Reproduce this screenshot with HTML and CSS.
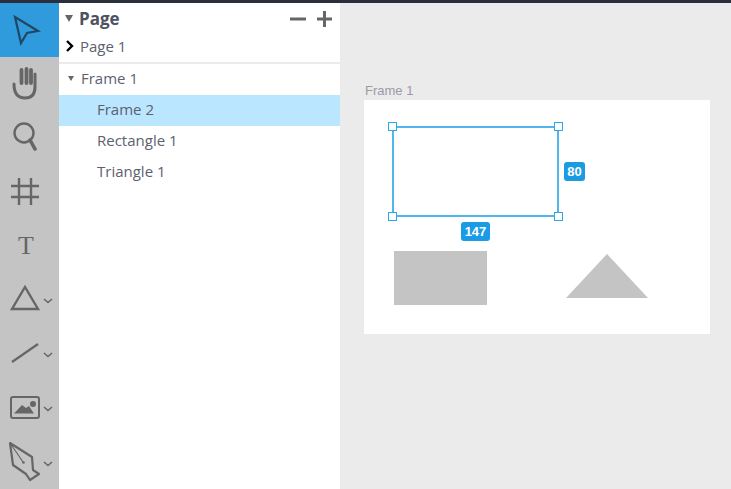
FILE: index.html
```html
<!DOCTYPE html>
<html lang="en">
<head>
    <meta charset="UTF-8">
    <meta name="viewport" content="width=device-width, initial-scale=1.0">
    <title>Frame Editor</title>
    <link rel="stylesheet" href="styles.css">
</head>
<body>
    <div class="top-bar"></div>
    <div class="editor">
        <div class="toolbar">
            <div class="tool is-active">
                <svg width="59" height="54" fill="none" stroke="#1f4866" stroke-width="2.2" stroke-linejoin="miter"><path d="M15 14 38 28 27 30 21 40Z"/></svg>
            </div>
            <div class="tool">
                <svg width="59" height="54" fill="none" stroke="#666" stroke-linecap="round"><path d="M21.500 13V26M26.500 12V26M31 13V26" stroke-width="3.800"/><path d="M35 17V30C35 38 31 41 25 41 18 41 14 37 14 27" stroke-width="3"/></svg>
            </div>
            <div class="tool">
                <svg width="59" height="54" fill="none" stroke="#666" stroke-linecap="round"><circle cx="24" cy="22" r="9.500" stroke-width="2.400"/><path d="M30 29 35 38" stroke-width="3.600"/></svg>
            </div>
            <div class="tool">
                <svg width="59" height="54" fill="none" stroke="#666" stroke-width="2.400"><path d="M19 13V40M31 13V40M11 21H39M11 32H39"/></svg>
            </div>
            <div class="tool">
                <span class="tool-text">T</span>
            </div>
            <div class="tool">
                <svg width="59" height="54" fill="none" stroke="#666" stroke-width="2.400"><path d="M25 14 38 36H12Z"/><path class="caret" d="M44 26 48 29.500 52 26"/></svg>
            </div>
            <div class="tool">
                <svg width="59" height="54" fill="none" stroke="#666" stroke-width="2.200"><path d="M12 35 38 17"/><path class="caret" d="M44 26 48 29.500 52 26"/></svg>
            </div>
            <div class="tool">
                <svg width="59" height="54" fill="none" stroke="#666" stroke-width="2"><rect x="11" y="16" width="28" height="21" rx="2"/><path d="M14 32.500 22 24 26 27 29 25 34 32.500Z" fill="#666" stroke="none"/><circle cx="33" cy="23" r="3" fill="#666" stroke="none"/><path class="caret" d="M44 26 48 29.500 52 26"/></svg>
            </div>
            <div class="tool">
                <svg width="59" height="54" fill="none" stroke="#666" stroke-width="2.200" stroke-linejoin="round"><path d="M10 8 32 22 33 35 39 39 30 45 26 39 13 30Z"/><path d="M10 8 23 27" stroke-width="1.200"/><circle cx="23.500" cy="27.500" r="1.300" fill="#666" stroke="none"/><path class="caret" d="M44 27 48 30.500 52 27"/></svg>
            </div>
        </div>

        <div class="panel">
            <div class="page-head">
                <span class="arrow-down"></span>
                <span class="page-title">Page</span>
                <svg class="page-actions" width="44" height="16" fill="none" stroke="#666" stroke-width="3"><path d="M2 8H18M29 8H44M36.500 0V16"/></svg>
            </div>
            <div class="page-row">
                <svg width="10" height="14" fill="none" stroke="#000" stroke-width="2.400"><path d="M2 2 7 7 2 12"/></svg>
                <span>Page 1</span>
            </div>
            <div class="layers">
                <div class="layer">
                    <span class="arrow-down small"></span>
                    <span>Frame 1</span>
                </div>
                <div class="layer child is-selected">Frame 2</div>
                <div class="layer child">Rectangle 1</div>
                <div class="layer child">Triangle 1</div>
            </div>
        </div>

        <div class="canvas">
            <div class="frame-label">Frame 1</div>
            <div class="frame">
                <div class="selection">
                    <span class="handle tl"></span>
                    <span class="handle tr"></span>
                    <span class="handle bl"></span>
                    <span class="handle br"></span>
                    <span class="size-badge height-badge">80</span>
                    <span class="size-badge width-badge">147</span>
                </div>
                <div class="shape-rect"></div>
                <div class="shape-triangle"></div>
            </div>
        </div>
    </div>
</body>
</html>
```

FILE: styles.css
```css
body {
    margin: 0;
    height: 489px;
    overflow: hidden;
    display: flex;
    flex-direction: column;
    font-family: "Open Sans", sans-serif;
    background-color: #ebebeb;
}

.top-bar {
    height: 3px;
    background-color: #2a2f3b;
}

.editor {
    flex: 1;
    display: flex;
    min-height: 0;
}

.toolbar {
    width: 59px;
    background-color: #c4c4c4;
}

.tool {
    height: 54px;
    display: flex;
    justify-content: center;
    align-items: center;
}

.tool svg {
    display: block;
}

.tool.is-active {
    background-color: #2f9bdc;
}

.tool-text {
    font-family: "Liberation Serif", serif;
    font-size: 26px;
    line-height: 1;
    color: #666;
    margin-left: -7px;
}

.caret {
    stroke-width: 1.6;
}

.panel {
    width: 281px;
    background-color: white;
    color: #5c6170;
    font-size: 15px;
}

.page-head {
    height: 30px;
    display: flex;
    align-items: center;
    padding: 1px 8px 0 6px;
    box-sizing: border-box;
}

.page-title {
    margin-left: 6px;
    font-size: 17px;
    font-weight: 700;
    color: #4e5260;
}

.page-actions {
    margin-left: auto;
}

.arrow-down {
    width: 0;
    height: 0;
    border-left: 4px solid transparent;
    border-right: 4px solid transparent;
    border-top: 7px solid #666;
}

.arrow-down.small {
    border-left-width: 3px;
    border-right-width: 3px;
    border-top-width: 5px;
    margin: 0 7px 0 9px;
}

.page-row {
    height: 29px;
    display: flex;
    align-items: center;
    gap: 5px;
    padding: 0 0 4px 6px;
    box-sizing: border-box;
}

.layers {
    border-top: 2px solid #ebebeb;
}

.layer {
    height: 31px;
    display: flex;
    align-items: center;
    padding-bottom: 3px;
    box-sizing: border-box;
}

.layer.child {
    padding-left: 38px;
}

.layer.is-selected {
    background-color: #bae6ff;
}

.canvas {
    flex: 1;
    position: relative;
}

.frame-label {
    position: absolute;
    left: 25px;
    top: 80px;
    font-family: "Liberation Sans", sans-serif;
    font-size: 13px;
    color: #9c9aa8;
}

.frame {
    position: absolute;
    left: 24px;
    top: 97px;
    width: 346px;
    height: 233.500px;
    background-color: white;
}

.selection {
    position: absolute;
    left: 28px;
    top: 26px;
    width: 163px;
    height: 87px;
    border: 2px solid #52b5ee;
}

.handle {
    position: absolute;
    width: 7px;
    height: 7px;
    background-color: white;
    border: 1px solid #2ea6ea;
}

.handle.tl { left: -6px; top: -6px; }
.handle.tr { right: -6px; top: -6px; }
.handle.bl { left: -6px; bottom: -6px; }
.handle.br { right: -6px; bottom: -6px; }

.size-badge {
    position: absolute;
    height: 19px;
    line-height: 19px;
    text-align: center;
    border-radius: 3px;
    background-color: #1a9be6;
    color: white;
    font-family: "Liberation Sans", sans-serif;
    font-size: 13px;
    font-weight: 700;
}

.height-badge {
    left: 170px;
    top: 34px;
    width: 21px;
}

.width-badge {
    left: 67px;
    top: 94px;
    width: 29px;
}

.shape-rect {
    position: absolute;
    left: 29.500px;
    top: 151px;
    width: 93.500px;
    height: 54px;
    background-color: #c4c4c4;
}

.shape-triangle {
    position: absolute;
    left: 202px;
    top: 154px;
    width: 0;
    height: 0;
    border-left: 41px solid transparent;
    border-right: 41px solid transparent;
    border-bottom: 44px solid #c4c4c4;
}
```
